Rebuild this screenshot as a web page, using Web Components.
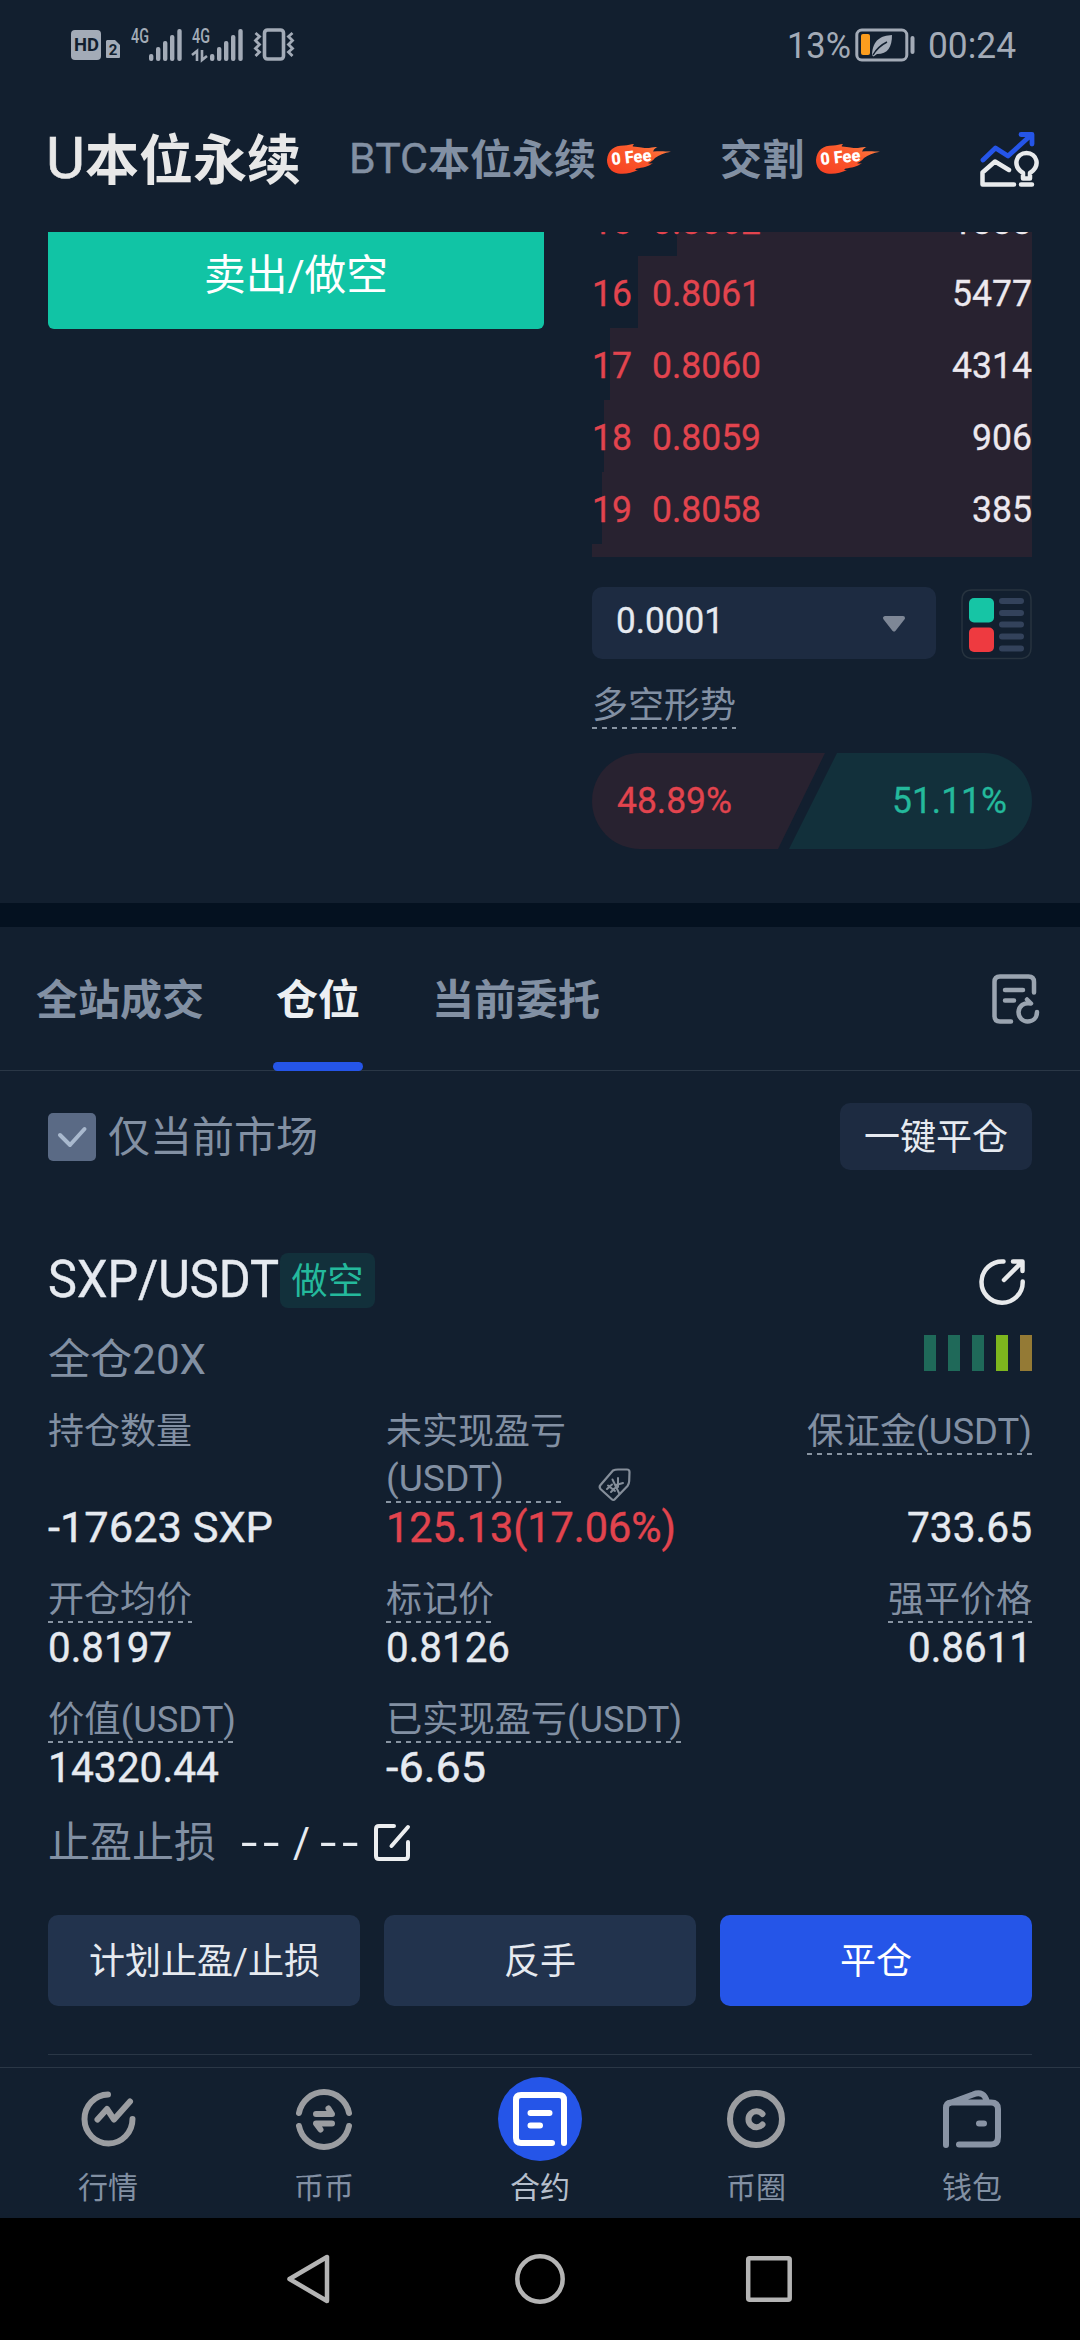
<!DOCTYPE html>
<html lang="zh-CN">
<head>
<meta charset="utf-8">
<title>合约</title>
<style>
html,body{margin:0;padding:0;background:#121f2f}
body{width:1080px;height:2340px;overflow:hidden;font-family:Roboto,"Noto Sans CJK SC",sans-serif;color:#e6eaf0;
--muted:#8290a3;--text:#e6eaf0;--red:#e2444e;--green:#24b99c;--panel:#1d2b41;--blue:#2555e8;--line:#2a3746}
</style>
</head>
<body>
<trade-app></trade-app>
<script>
const define=(name,css,html)=>customElements.define(name,class extends HTMLElement{
  connectedCallback(){
    if(this.shadowRoot)return;
    const r=this.attachShadow({mode:'open'});
    r.innerHTML='<style>:host{display:block;box-sizing:border-box}*{box-sizing:border-box}svg{display:block;flex:none;overflow:visible}'+css+'</style>'+(typeof html==='function'?html(this):html);
  }
});

/* One line of text, condensed or widened to the advance width in "w". */
customElements.define('x-text',class extends HTMLElement{
  connectedCallback(){
    if(this.shadowRoot)return;
    const r=this.attachShadow({mode:'open'});
    r.innerHTML='<style>:host{display:block;white-space:pre;flex:none}span{display:inline-block;transform-origin:0 50%}</style><span><slot></slot></span>';
    const w=+this.getAttribute('w');
    if(w){
      const s=r.querySelector('span');
      const n=s.getBoundingClientRect().width;
      s.style.transform='scaleX('+w/n+')';
      this.style.width=w+'px';
    }
  }
});

const bars=`<svg width="33" height="32" viewBox="0 0 33 32" fill="#a3abb7"><rect x="0" y="25" width="4.4" height="7" rx="2"/><rect x="7" y="18" width="4.4" height="14" rx="2"/><rect x="14" y="12" width="4.4" height="20" rx="2"/><rect x="21" y="6" width="4.4" height="26" rx="2"/><rect x="28.3" y="0" width="4.4" height="32" rx="2"/></svg>`;

define('status-bar',`
:host{height:90px;display:flex;justify-content:space-between;padding:28px 64px 0 71px;color:#a3abb7}
div{display:flex;height:34px}
.hd{width:30px;height:30px;margin-top:2px;border-radius:4px;background:#a3abb7;color:#121f2f;font:700 19px/30px Roboto;display:flex;justify-content:center}
.net{flex-direction:column;justify-content:space-between;width:18px;height:33px;margin-right:0}
.net x-text{font:500 20px/17px Roboto}
.num{font-size:37px;line-height:36px}
`,`
<div><span class="hd"><x-text w="25">HD</x-text></span>
<svg style="margin:12px 0 0 5px" width="14" height="18" viewBox="0 0 14 18"><path d="M1 0H9L14 5V17a1 1 0 0 1-1 1H1a1 1 0 0 1-1-1V1z" fill="#a3abb7"/><text x="7" y="14.5" font-size="15" font-weight="700" text-anchor="middle" font-family="Roboto" fill="#121f2f">2</text></svg>
<div class="net" style="margin-left:11px"><x-text w="18">4G</x-text></div><span style="margin-top:1px">${bars}</span>
<div class="net" style="margin-left:10px"><x-text w="18">4G</x-text><svg width="16" height="11" viewBox="0 0 16 11" fill="none" stroke="#a3abb7" stroke-width="2.6"><path d="M0 5L5 1V11M10 0V10L15 6"/></svg></div><span style="margin-top:1px">${bars}</span>
<svg style="margin-left:11px" width="40" height="33" viewBox="0 0 40 33" fill="none" stroke="#a3abb7"><rect x="10.5" y="2" width="19" height="29" rx="3" stroke-width="3.6"/><path d="M1.5 5l4 3.500l-4 4l4 4l-4 4l4 3.500l-4 4M38.500 5l-4 3.500l4 4l-4 4l4 4l-4 3.500l4 4" stroke-width="2.800"/></svg></div>
<div><x-text class="num" w="64">13%</x-text>
<svg style="margin-left:4px" width="62" height="34" viewBox="0 0 62 34"><rect x="1.800" y="2" width="50" height="30" rx="5" fill="none" stroke="#a3abb7" stroke-width="3"/><rect x="6" y="6" width="9" height="21" rx="2" fill="#fb9d1e"/><path d="M17 27C18 11 26 8 37 7C37 19 33 26 22 26L18.500 28.500ZM18.500 27C22 21 26 17 31 14" fill="#a3abb7"/><path d="M18 27C22 20 26 17 32 14" fill="none" stroke="#121f2f" stroke-width="1.500"/><path d="M57.500 10V24" stroke="#a3abb7" stroke-width="4" stroke-linecap="round"/></svg>
<x-text class="num" style="margin-left:11px" w="88">00:24</x-text></div>`);

define('fee-flame',':host{width:64px;height:30px;flex:none}',`
<svg width="64" height="30" viewBox="0 0 64 30"><defs><linearGradient id="flame" x1="0" y1="1" x2="1" y2="0"><stop offset="0" stop-color="#f63f22"/><stop offset=".6" stop-color="#fb5a2c"/><stop offset="1" stop-color="#ff8a4a"/></linearGradient></defs>
<path d="M0 16C1 6 7 1.500 17 1.500C21 1.500 24 0 27 0C26 1.500 25 2 26 2.500C34 3 38 4.500 42 4C46 3 48 3 50.500 3C47 4.500 47 6 46 7.500C52 7 57 7 64 7.800C57 9 52 11 48 14C46 16.500 44 18 41 19C43 20 44 19.500 46 19C41 23 35 23.500 30 24.500C27 25.500 28 26 31 26C25 29 18 30.500 11 29.500C4 28 0 23 0 16Z" fill="url(#flame)"/>
<g transform="translate(5 21) rotate(-6)"><text font-family="Roboto" font-size="17" font-weight="900" fill="#fff" textLength="40" lengthAdjust="spacingAndGlyphs">0 Fee</text></g></svg>`);

define('market-header',`
:host{height:142px;display:flex;align-items:flex-start;padding:41px 40px 0 46px}
.t{display:flex;height:56px;align-items:center;line-height:56px;font-weight:700;color:var(--muted);font-size:42px}
.l{font-weight:400}
`,`
<div class="t" style="color:#e8e8e8;font-size:54px"><x-text class="l" style="font-size:57px;-webkit-text-stroke:.6px" w="39">U</x-text><x-text style="margin-top:6px">本位永续</x-text></div>
<div class="t" style="margin-left:48px"><x-text class="l" style="-webkit-text-stroke:.4px" w="79">BTC</x-text><x-text style="margin-top:3px">本位永续</x-text><fee-flame style="margin-left:11px"></fee-flame></div>
<div class="t" style="margin-left:49px"><x-text style="margin-top:3px">交割</x-text><fee-flame style="margin-left:12px"></fee-flame></div>
<svg style="margin:1px 0 0 auto" width="60" height="56" viewBox="0 0 60 56" fill="none" stroke-width="4.500" stroke-linecap="round" stroke-linejoin="round"><path d="M3 28L15.500 16L28 24L50 4M41 2.500H52V12" stroke="#2555e8" stroke-width="4.800"/><path d="M29 38L15 29.500L2.500 40.500V52.500H34M41 52.500H52M43 46.500H50V41C61 34 57 21 46.500 21C36 21 32 34 43 41Z" stroke="#e8eaec"/></svg>`);

define('book-row',`
:host{height:72px;display:flex;align-items:center;font-size:36px;line-height:72px;padding:3px 0 0;color:#ece8ee;-webkit-text-stroke:.3px}
x-text{color:var(--red)}
x-text:last-child{color:inherit;margin-left:auto}
`,e=>{
  const [n,p,a,x]=e.getAttribute('row').split(',');
  e.style.background='linear-gradient(90deg,transparent '+x+'px,#282230 '+x+'px)';
  return `<x-text w="40">${n}</x-text><x-text w="109" style="margin-left:20px">${p}</x-text><x-text w="${a.length*20}">${a}</x-text>`});

define('order-book',`
:host{width:440px}
.book{height:325px;overflow:hidden}
.book>div{margin-top:-48px}
.sel{display:flex;justify-content:space-between;margin-top:30px;height:72px}
.pick{width:344px;background:var(--panel);border-radius:10px;display:flex;justify-content:space-between;padding:0 30px 0 24px;font-size:36px;line-height:68px;-webkit-text-stroke:.3px}
.lab{display:inline-block;margin-top:20px;height:50px;font-size:36px;line-height:55px;color:var(--muted);background:repeating-linear-gradient(90deg,#8894a2 0 5px,transparent 5px 10px) 0 100%/100% 2px no-repeat}
.ratio{height:96px;margin-top:24px;display:flex;font-size:36px;line-height:97px;-webkit-text-stroke:.3px}
.ratio div{padding:0 25px}
.r{width:233px;background:#282230;border-radius:48px 0 0 48px;clip-path:polygon(0 0,100% 0,186px 100%,0 100%);color:var(--red)}
.g{width:243px;margin-left:-36px;background:#12303b;border-radius:0 48px 48px 0;clip-path:polygon(48px 0,100% 0,100% 100%,0 100%);color:var(--green);display:flex;justify-content:flex-end}
`,`
<div class="book"><div>
<book-row row="15,0.8062,1888,85"></book-row><book-row row="16,0.8061,5477,46"></book-row><book-row row="17,0.8060,4314,18"></book-row><book-row row="18,0.8059,906,12"></book-row><book-row row="19,0.8058,385,10"></book-row><book-row row="20,0.8057,210,0"></book-row></div></div>
<div class="sel"><div class="pick"><x-text w="108">0.0001</x-text><svg style="margin-top:28px" width="24" height="17" viewBox="0 0 24 17"><path d="M3 3H21L12 14.500Z" fill="#7e8796" stroke="#7e8796" stroke-width="4" stroke-linejoin="round"/></svg></div>
<svg width="71" height="72" viewBox="0 0 71 72"><path d="M10 71.500Q1 70 1 61V13Q1 3 11 3H60Q70 3 70 13V61Q70 70 61 71.500H10" fill="none" stroke="#27333f" stroke-width="1.500"/><rect x="8" y="11" width="25" height="24.500" rx="5" fill="#16c5a5"/><rect x="8" y="40.500" width="25" height="24.500" rx="5" fill="#ee3a40"/><path d="M41 14H60M41 26H60M41 37.500H60M41 49.500H60M41 61.500H60" stroke="#33425b" stroke-width="6" stroke-linecap="round"/></svg></div>
<div class="lab">多空形势</div>
<div class="ratio"><div class="r"><x-text w="115">48.89%</x-text></div><div class="g"><x-text w="115">51.11%</x-text></div></div>`);

define('trade-panel',`
:host{height:671px;display:flex;justify-content:space-between;padding:0 48px;overflow:hidden}
.sell{width:496px;height:109px;margin-top:-12px;background:#11c4a5;border-radius:6px;color:#fff;font-size:42px;line-height:111px;display:flex;justify-content:center}
`,`<div class="sell"><x-text w="184">卖出/做空</x-text></div><order-book></order-book>`);

define('list-tabs',`
:host{height:144px;display:flex;gap:72px;padding:0 40px 0 36px;border-bottom:1px solid var(--line);font-size:42px;font-weight:700;line-height:147px;color:var(--muted)}
.on{color:#eceff2;height:144px;position:relative}
.on i{position:absolute;left:-3px;right:-3px;bottom:0;height:9px;border-radius:5px;background:var(--blue)}
`,`<span>全站成交</span><span class="on">仓位<i></i></span><span>当前委托</span>
<svg style="margin:47px 0 0 auto" width="48" height="50" viewBox="0 0 48 50" fill="none" stroke="#9aa4b0" stroke-width="4.500" stroke-linecap="round" stroke-linejoin="round"><path d="M42 18.500V8Q42 2.500 36.500 2.500H8Q2.500 2.500 2.500 8V42Q2.500 47.500 8 47.500H19M13 16H31M13 26.500H22M35 25.500L39 29.500C32 28 27 32 26.500 38C26.500 44 31 47.500 35.500 47.500C41 47.500 45 44 45 38"/></svg>`);

define('market-filter',`
:host{height:100px;margin-top:32px;display:flex;align-items:flex-start;padding:0 48px;color:var(--muted);font-size:42px;line-height:67px}
.box{width:48px;height:48px;margin:10px 12px 0 0;border-radius:5px;background:#5a6a85}
.btn{margin-left:auto;width:192px;height:67px;border-radius:10px;background:var(--panel);color:var(--text);font-size:36px;line-height:70px;text-align:center}
`,`<div class="box"><svg width="48" height="48" fill="none" stroke="#a9b9ce" stroke-width="4" stroke-linecap="round" stroke-linejoin="round"><path d="M12 22L22 32L36.500 16"/></svg></div><span style="margin-top:1px">仅当前市场</span><div class="btn">一键平仓</div>`);

define('data-cell',`
:host{display:flex;flex-direction:column}
:host([end]){align-items:flex-end}
.l{font-size:36px;line-height:48px;height:48px;color:var(--muted);display:flex}
.u{background:repeating-linear-gradient(90deg,#8894a2 0 5px,transparent 5px 10px) 0 45px/100% 2px no-repeat}
.v{font-size:42px;line-height:48px;height:48px;color:var(--text);margin-top:auto;display:flex;-webkit-text-stroke:.4px}
:host([red]) .v{color:var(--red)}
`,e=>{const g=k=>e.getAttribute(k);
  return `<div class="l ${e.hasAttribute('plain')?'':'u'}"><x-text w="${g('lw')}">${g('label')}</x-text></div>`+
  (g('label2')?`<div style="display:flex"><div class="l u" style="width:176px;line-height:46px"><x-text w="${g('l2w')}">${g('label2')}</x-text></div><slot></slot></div>`:'')+
  `<div class="v"><x-text w="${g('vw')}">${g('value')}</x-text></div>`});

define('position-card',`
:host{padding:0 48px;height:815px;margin-top:49px}
.row{display:flex;align-items:flex-start}
.badge{width:95px;height:55px;margin:1px 0 0 1px;border-radius:8px;background:#12303b;color:var(--green);font-size:36px;line-height:58px;text-align:center}
.lev{display:flex;gap:12px}
.lev i{width:12px;height:36px;background:#1f6959}
.grid{display:grid;grid-template-columns:338px 1fr auto;grid-template-rows:144px 96px 96px;row-gap:24px;margin-top:25px}
.act{display:grid;grid-template-columns:repeat(3,312px);gap:24px;margin-top:51px}
.act div{height:91px;border-radius:10px;background:#22334d;font-size:36px;line-height:94px;display:flex;justify-content:center}
.act div:last-child{background:var(--blue);color:#fff}
.dash{letter-spacing:4px}
`,`
<div class="row" style="height:83px"><x-text style="font-size:51px;line-height:56px;-webkit-text-stroke:.4px" w="231">SXP/USDT</x-text><div class="badge">做空</div>
<svg style="margin:7px 7px 0 auto" width="46" height="46" viewBox="0 0 46 46" fill="none" stroke="#e8eaec" stroke-width="4.500" stroke-linecap="round" stroke-linejoin="round"><path d="M24.500 2.500A20.600 20.600 0 1 0 43.700 22.500M25 21L42 4M34 2.500H43.500V12"/></svg></div>
<div class="row" style="height:48px;justify-content:space-between"><x-text style="font-size:42px;line-height:50px;color:var(--muted)" w="158">全仓20X</x-text><div class="lev"><i></i><i></i><i></i><i style="background:#7db61e"></i><i style="background:#947a35"></i></div></div>
<div class="grid">
<data-cell plain label="持仓数量" lw="144" value="-17623 SXP" vw="225"></data-cell>
<data-cell red label="未实现盈亏" lw="180" plain label2="(USDT)" l2w="118" value="125.13(17.06%)" vw="290"><svg style="margin:12px 0 0 36px" width="33" height="34" viewBox="0 0 33 34" fill="none" stroke="#858e9a" stroke-width="2.200" stroke-linecap="round" stroke-linejoin="round"><path d="M15 2.500Q17 1.500 20 1.500L29 1.500Q31.500 1.500 31.500 4L31.200 13Q31 16 29.500 18L17 31Q15.500 33 13.500 31L2.500 21Q.8 19 2.500 17Z"/><path d="M14.500 11.500L21 25M18 17L25 15M20 10V19M10 17.500L17 23M9 21L14 16.500M13 24L17 20" stroke-width="2"/></svg></data-cell>
<data-cell end label="保证金(USDT)" lw="225" value="733.65" vw="125"></data-cell>
<data-cell label="开仓均价" lw="144" value="0.8197" vw="124" style="align-items:flex-start"></data-cell>
<data-cell label="标记价" lw="108" value="0.8126" vw="124" style="align-items:flex-start"></data-cell>
<data-cell end label="强平价格" lw="144" value="0.8611" vw="124"></data-cell>
<data-cell label="价值(USDT)" lw="188" value="14320.44" vw="171" style="align-items:flex-start"></data-cell>
<data-cell label="已实现盈亏(USDT)" lw="296" value="-6.65" vw="100" style="align-items:flex-start"></data-cell>
</div>
<div class="row" style="margin-top:26px;height:46px;font-size:42px;line-height:49px"><span style="color:var(--muted)">止盈止损</span><x-text class="dash" style="margin-left:25px" w="44">--</x-text><x-text style="margin:0 10px 0 8px" w="17">/</x-text><x-text class="dash" w="44">--</x-text><svg style="margin:6px 0 0 10px" width="37" height="37" viewBox="0 0 37 37" fill="none" stroke="#eceef0" stroke-width="4" stroke-linecap="round" stroke-linejoin="round"><path d="M20 2H5Q2 2 2 5V32Q2 35 5 35H31Q34 35 34 32V18M17.500 22L34 3"/></svg></div>
<div class="act"><div><x-text w="231">计划止盈/止损</x-text></div><div>反手</div><div>平仓</div></div>
<div style="margin-top:48px;border-top:1px solid var(--line)"></div>`);

define('nav-item',`
:host{flex:1;display:flex;flex-direction:column;align-items:center;font-size:30px;line-height:42px;color:var(--muted)}
:host([on]){color:#b6bfcc}
.i{width:84px;height:84px;margin:9px 0 6px;border-radius:50%;display:flex;align-items:center;justify-content:center}
:host([on]) .i{background:var(--blue)}
`,`<div class="i"><slot name="icon"></slot></div><slot></slot>`);

define('bottom-nav',`
:host{height:151px;border-top:1px solid var(--line);display:flex;align-items:flex-start}
svg{fill:none;stroke:#9b9da1;stroke-width:6;stroke-linecap:round;stroke-linejoin:round}
`,`
<nav-item><svg slot="icon" width="60" height="60"><path d="M30 5.500A24 24.500 0 1 0 54.500 30M19.500 30.500L29 20L36 30.500L52 12.500"/></svg>行情</nav-item>
<nav-item><svg slot="icon" width="60" height="60"><path d="M5 24A25.500 26 0 0 1 55 24M5 37A25.500 26 0 0 0 55 37M22 25H38L34.500 19.500M38 34.500H22L26.500 40.500"/></svg>币币</nav-item>
<nav-item on><svg slot="icon" width="60" height="60" style="stroke:#fff"><path d="M54 54V11Q54 6 49 6H11Q6 6 6 11V49Q6 54 11 54H42M20.500 24H39.500M20.500 36.500H30"/></svg>合约</nav-item>
<nav-item><svg slot="icon" width="60" height="60"><circle cx="30" cy="30" r="26"/><path d="M36.500 25A8 8 0 1 0 36.500 35.500"/></svg>币圈</nav-item>
<nav-item><svg slot="icon" width="60" height="60" style="stroke:#8994a5"><path d="M4 56V19Q4 14 9 13.500H49Q56 13.500 56 20V48Q56 55.500 49 55.500H17M8 14L31 5.500Q42 1 45 13M37 34.500H42"/></svg>钱包</nav-item>`);

define('system-nav',`
:host{height:122px;background:#000;display:flex;padding-left:287px;align-items:center;gap:181px}
svg{fill:none;stroke:#b4b4b4;stroke-width:4.500;stroke-linejoin:round}
`,`<svg style="margin-right:4px" width="43" height="50"><path d="M2.500 25L40 3V47Z"/></svg><svg width="50" height="50"><circle cx="25" cy="25" r="22.700"/></svg><svg width="46" height="46"><rect x="2.200" y="2.200" width="41.500" height="41.500" rx="1.500"/></svg>`);

define('trade-app',`
:host{width:1080px;height:2340px;display:flex;flex-direction:column;background:#121f2f;overflow:hidden}
:host>*{flex:none}
.gap{height:24px;background:#041120}
`,`<status-bar></status-bar><market-header></market-header><trade-panel></trade-panel><div class="gap"></div><list-tabs></list-tabs><market-filter></market-filter>
<position-card></position-card><bottom-nav></bottom-nav><system-nav></system-nav>`);
</script>
</body>
</html>
